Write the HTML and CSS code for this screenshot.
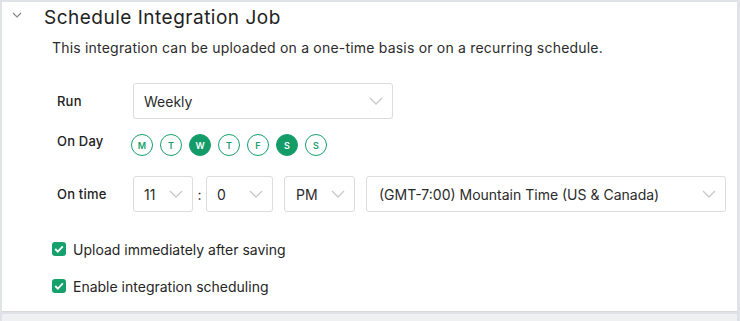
FILE: index.html
```html
<!DOCTYPE html>
<html lang="en">
<head>
  <meta charset="UTF-8">
  <title>Schedule Integration Job</title>
  <link rel="stylesheet" href="styles.css">
</head>
<body>
  <div class="panel">
    <div class="panel-head">
      <svg class="caret" width="10" height="6" viewBox="0 0 10 6"><path d="M1 1l4 4 4-4" fill="none" stroke="#888" stroke-width="1.2"/></svg>
      <h2>Schedule Integration Job</h2>
    </div>
    <p class="desc">This integration can be uploaded on a one-time basis or on a recurring schedule.</p>

    <div class="form">
      <div class="row">
        <label class="lbl">Run</label>
        <div class="select run">
          <span>Weekly</span>
          <svg class="chev" width="14" height="8" viewBox="0 0 14 8"><path d="M1 1l6 6 6-6" fill="none" stroke="#c8c8c8" stroke-width="1.3"/></svg>
        </div>
      </div>

      <div class="row day-row">
        <label class="lbl">On Day</label>
        <div class="days">
          <span class="day">M</span>
          <span class="day">T</span>
          <span class="day on">W</span>
          <span class="day">T</span>
          <span class="day">F</span>
          <span class="day on">S</span>
          <span class="day">S</span>
        </div>
      </div>

      <div class="row time-row">
        <label class="lbl">On time</label>
        <div class="select hour">
          <span>11</span>
          <svg class="chev" width="14" height="8" viewBox="0 0 14 8"><path d="M1 1l6 6 6-6" fill="none" stroke="#c8c8c8" stroke-width="1.3"/></svg>
        </div>
        <span class="colon">:</span>
        <div class="select minute">
          <span>0</span>
          <svg class="chev" width="14" height="8" viewBox="0 0 14 8"><path d="M1 1l6 6 6-6" fill="none" stroke="#c8c8c8" stroke-width="1.3"/></svg>
        </div>
        <div class="select ampm">
          <span>PM</span>
          <svg class="chev" width="14" height="8" viewBox="0 0 14 8"><path d="M1 1l6 6 6-6" fill="none" stroke="#c8c8c8" stroke-width="1.3"/></svg>
        </div>
        <div class="select zone">
          <span>(GMT-7:00) Mountain Time (US &amp; Canada)</span>
          <svg class="chev" width="14" height="8" viewBox="0 0 14 8"><path d="M1 1l6 6 6-6" fill="none" stroke="#c8c8c8" stroke-width="1.3"/></svg>
        </div>
      </div>
    </div>

    <div class="checks">
      <label class="check">
        <span class="box"><svg width="10" height="8" viewBox="0 0 10 8"><path d="M1.2 4l2.6 2.6L8.8 1.4" fill="none" stroke="#fff" stroke-width="1.8"/></svg></span>
        Upload immediately after saving
      </label>
      <label class="check">
        <span class="box"><svg width="10" height="8" viewBox="0 0 10 8"><path d="M1.2 4l2.6 2.6L8.8 1.4" fill="none" stroke="#fff" stroke-width="1.8"/></svg></span>
        Enable integration scheduling
      </label>
    </div>
  </div>
  <div class="next-panel"></div>
</body>
</html>
```

FILE: styles.css
```css
body {
  margin: 0;
  padding: 2px 3px 0 2px;
  background: #dfe2e6;
  font-family: Inter, "Noto Sans", sans-serif;
  color: #262626;
  height: 319px;
  overflow: hidden;
}
.panel {
  background: #fff;
  height: 310px;
  box-sizing: border-box;
  border-bottom: 1px solid #d6d8db;
}
.panel-head {
  display: flex;
  align-items: center;
  height: 30px;
  padding-left: 10px;
}
.caret {
  margin-right: 22px;
  margin-top: -4px;
}
h2 {
  margin: 0;
  font-size: 19px;
  font-weight: 400;
  color: #222;
  letter-spacing: 0.5px;
}
.desc {
  margin: 7px 0 0 50px;
  font-size: 14px;
  letter-spacing: 0.2px;
  color: #2b2b2b;
}
.form {
  margin: 27px 0 0 55px;
}
.row {
  display: flex;
  align-items: center;
}
.lbl {
  width: 76px;
  font-size: 13px;
  font-weight: 500;
  letter-spacing: 0.2px;
  color: #222;
}
.select {
  display: flex;
  align-items: center;
  justify-content: space-between;
  height: 36px;
  box-sizing: border-box;
  border: 1px solid #dcdcdc;
  border-radius: 3px;
  padding: 0 9px 0 10px;
  font-size: 14px;
  color: #2b2b2b;
}
.run { width: 260px; }
.day-row { margin-top: 10px; height: 30px; }
.day-row .lbl { margin-top: -6px; }
.days {
  display: flex;
  gap: 7px;
  margin-left: -2px;
  margin-top: 2px;
}
.day {
  width: 22px;
  height: 22px;
  box-sizing: border-box;
  border: 1px solid #17a06c;
  border-radius: 50%;
  display: flex;
  align-items: center;
  justify-content: center;
  font-size: 9px;
  font-weight: 600;
  color: #17a06c;
}
.day.on {
  background: #149c68;
  color: #fff;
}
.time-row { margin-top: 17px; }
.hour { width: 60px; }
.colon {
  width: 13px;
  text-align: center;
  font-size: 14px;
}
.minute { width: 67px; margin-right: 11px; }
.ampm { width: 71px; margin-right: 11px; padding-left: 11px; }
.zone { width: 360px; padding-left: 12px; }
.checks {
  margin: 29px 0 0 50px;
}
.check {
  display: flex;
  align-items: center;
  font-size: 14px;
  color: #262626;
  height: 16px;
  margin-bottom: 21px;
}
.box {
  width: 14px;
  height: 14px;
  border-radius: 3px;
  background: #16a06b;
  display: flex;
  align-items: center;
  justify-content: center;
  margin-right: 7px;
}
.next-panel {
  margin-top: 2px;
  height: 8px;
  background: #eff0f1;
}
```
